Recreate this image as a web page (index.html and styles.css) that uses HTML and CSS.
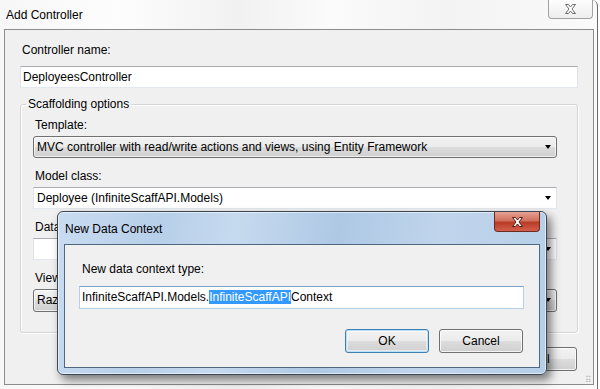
FILE: index.html
```html
<!DOCTYPE html>
<html lang="en">
<head>
  <meta charset="UTF-8" />
  <title>Add Controller</title>
  <link rel="stylesheet" href="styles.css">
</head>
<body>
  <div class="window">
    <div class="titlebar">
      <span class="title">Add Controller</span>
      <span class="close-btn">
        <svg width="13" height="10" viewBox="0 0 13 10"><path d="M1.5 0.5H4.5L6.5 3L8.5 0.5H11.5L8 5L11.5 9.5H8.5L6.5 7L4.5 9.5H1.5L5 5Z" fill="#fff" stroke="#6c6c6c" stroke-width="1"/></svg>
      </span>
    </div>

    <div class="client">
      <div class="label">Controller name:</div>
      <div class="textbox">DeployeesController</div>

      <fieldset class="group">
        <legend>Scaffolding options</legend>

        <div class="label">Template:</div>
        <div class="select">MVC controller with read/write actions and views, using Entity Framework<span class="arrow"></span></div>

        <div class="label">Model class:</div>
        <div class="combo">Deployee (InfiniteScaffAPI.Models)<span class="arrow"></span></div>

        <div class="label">Data context class:</div>
        <div class="combo"><span class="arrow"></span></div>

        <div class="label">Views:</div>
        <div class="select last">Razor (CSHTML)<span class="arrow"></span></div>
      </fieldset>

      <div class="actions">
        <span class="button">Add</span>
        <span class="button">Cancel</span>
      </div>
      <div class="grip">⠿</div>
    </div>
  </div>

  <!-- modal over the main window -->
  <div class="modal">
    <div class="modal-title">
      <span class="title">New Data Context</span>
      <span class="close-red">
        <svg width="13" height="10" viewBox="0 0 13 10"><path d="M1.5 0.5H4.5L6.5 3L8.5 0.5H11.5L8 5L11.5 9.5H8.5L6.5 7L4.5 9.5H1.5L5 5Z" fill="#fff" stroke="#5a1a10" stroke-width="1"/></svg>
      </span>
    </div>
    <div class="modal-client">
      <div class="label">New data context type:</div>
      <div class="textbox focused">InfiniteScaffAPI.Models.<span class="sel">InfiniteScaffAPI</span>Context</div>
      <div class="modal-actions">
        <span class="button default">OK</span>
        <span class="button">Cancel</span>
      </div>
    </div>
  </div>
</body>
</html>
```

FILE: styles.css
```css
body {
  margin: 0;
  width: 600px;
  height: 389px;
  overflow: hidden;
  position: relative;
  background: #fff;
  font-family: "Liberation Sans", Arial, sans-serif;
  font-size: 12px;
  color: #000;
}

.window {
  width: 598px;
  height: 389px;
  border-right: 1px solid #6a6a6a;
  border-top-right-radius: 6px;
  box-sizing: border-box;
  background: linear-gradient(to right, #f7f7f7, #fdfdfd 20%, #f1f1f1 40%, #fbfbfb 55%, #f3f3f3 75%, #fafafa);
}

.titlebar {
  height: 29px;
  display: flex;
  align-items: flex-start;
  padding-left: 6px;
}

.titlebar .title {
  line-height: 30px;
}

.close-btn {
  margin-left: auto;
  margin-right: 4px;
  width: 45px;
  height: 19px;
  box-sizing: border-box;
  border: 1px solid #a3a3a3;
  border-top: none;
  border-radius: 0 0 4px 4px;
  background: linear-gradient(#fdfdfd, #eeeeee);
  display: flex;
  align-items: center;
  justify-content: center;
}

.client {
  position: relative;
  margin-left: 4px;
  width: 590px;
  height: 356px;
  box-sizing: border-box;
  border: 1px solid #8c8c8c;
  background: #f0f0f0;
  padding: 13px 15px 0 15px;
}

.label {
  line-height: 15px;
  padding-left: 2px;
  margin-bottom: 3px;
}

.client > .label {
  margin-bottom: 8px;
}

.textbox {
  height: 22px;
  line-height: 20px;
  box-sizing: border-box;
  padding-left: 2px;
  background: #fff;
  border: 1px solid #e2e3ea;
  border-top-color: #abadb3;
  border-bottom-color: #e3e9ef;
  white-space: nowrap;
  overflow: hidden;
}

.group {
  margin: 9px 0 0 0;
  padding: 6px 20px 20px 12px;
  border: 1px solid #d5d5d5;
  border-radius: 3px;
  box-shadow: inset 1px 1px 0 #fff, 1px 1px 0 #fff;
}

.group legend {
  margin-left: -7px;
  padding: 0 2px;
  line-height: 15px;
}

.select,
.combo {
  position: relative;
  height: 22px;
  line-height: 20px;
  box-sizing: border-box;
  padding-left: 3px;
  margin-bottom: 11px;
  white-space: nowrap;
}

.select {
  border: 1px solid #707070;
  border-radius: 3px;
  background: linear-gradient(#f2f2f2, #ebebeb 50%, #dddddd 50%, #cfcfcf);
  box-shadow: inset 0 0 0 1px rgba(255, 255, 255, 0.7);
}

.select.last {
  height: 23px;
  margin-bottom: 0;
}

.combo {
  background: #fff;
  border: 1px solid #e2e3ea;
  border-top-color: #abadb3;
  border-bottom-color: #e3e9ef;
}

.arrow {
  position: absolute;
  right: 5px;
  top: 8px;
  border-left: 3.5px solid transparent;
  border-right: 3.5px solid transparent;
  border-top: 4px solid #000;
}

.actions {
  display: flex;
  justify-content: flex-end;
  gap: 8px;
  margin-top: 14px;
  padding-right: 1px;
}

.button {
  width: 92px;
  height: 24px;
  line-height: 22px;
  box-sizing: border-box;
  text-align: center;
  border: 1px solid #707070;
  border-radius: 3px;
  background: linear-gradient(#f2f2f2, #ebebeb 50%, #dddddd 50%, #cfcfcf);
  box-shadow: inset 0 0 0 1px rgba(255, 255, 255, 0.75);
}

.grip {
  position: absolute;
  right: 1px;
  bottom: -1px;
  font-size: 9px;
  color: #b0b0b0;
}

/* New Data Context dialog */
.modal {
  position: absolute;
  left: 57px;
  top: 211px;
  width: 490px;
  height: 164px;
  box-sizing: border-box;
  padding: 0 6px 6px 6px;
  border: 1px solid #3b4754;
  border-radius: 6px;
  background: linear-gradient(100deg, #c9dcf1, #b7cfe9 20%, #c6daef 35%, #aec8e4 55%, #c0d5ec 75%, #b6cee8);
  box-shadow: inset 0 0 0 1px rgba(255, 255, 255, 0.55), 4px 5px 10px rgba(0, 0, 0, 0.5);
}

.modal-title {
  height: 32px;
  display: flex;
  align-items: flex-start;
}

.modal-title .title {
  padding-left: 1px;
  line-height: 34px;
}

.close-red {
  margin-left: auto;
  width: 46px;
  height: 20px;
  box-sizing: border-box;
  border: 1px solid #6e2a20;
  border-top: none;
  border-radius: 0 0 4px 4px;
  background: linear-gradient(#e6a294, #d0705f 45%, #b93b28 55%, #d2604b);
  display: flex;
  align-items: center;
  justify-content: center;
}

.modal-client {
  height: 124px;
  box-sizing: border-box;
  border: 1px solid #4f6780;
  background: #f0f0f0;
  padding: 17px 15px 0 14px;
}

.modal-client .label {
  padding-left: 3px;
  margin-bottom: 9px;
}

.textbox.focused {
  height: 23px;
  line-height: 21px;
  border-color: #b7d0e6;
  border-top-color: #7da2ce;
}

.sel {
  background: #3399ff;
  color: #fff;
}

.modal-actions {
  display: flex;
  justify-content: flex-end;
  gap: 10px;
  margin-top: 20px;
  padding-right: 1px;
}

.modal-actions .button {
  width: 84px;
}

.button.default {
  border-color: #3c7fb1;
  box-shadow: inset 0 0 0 1px #b8e0f8, inset 0 0 0 2px rgba(255, 255, 255, 0.5);
}
```
